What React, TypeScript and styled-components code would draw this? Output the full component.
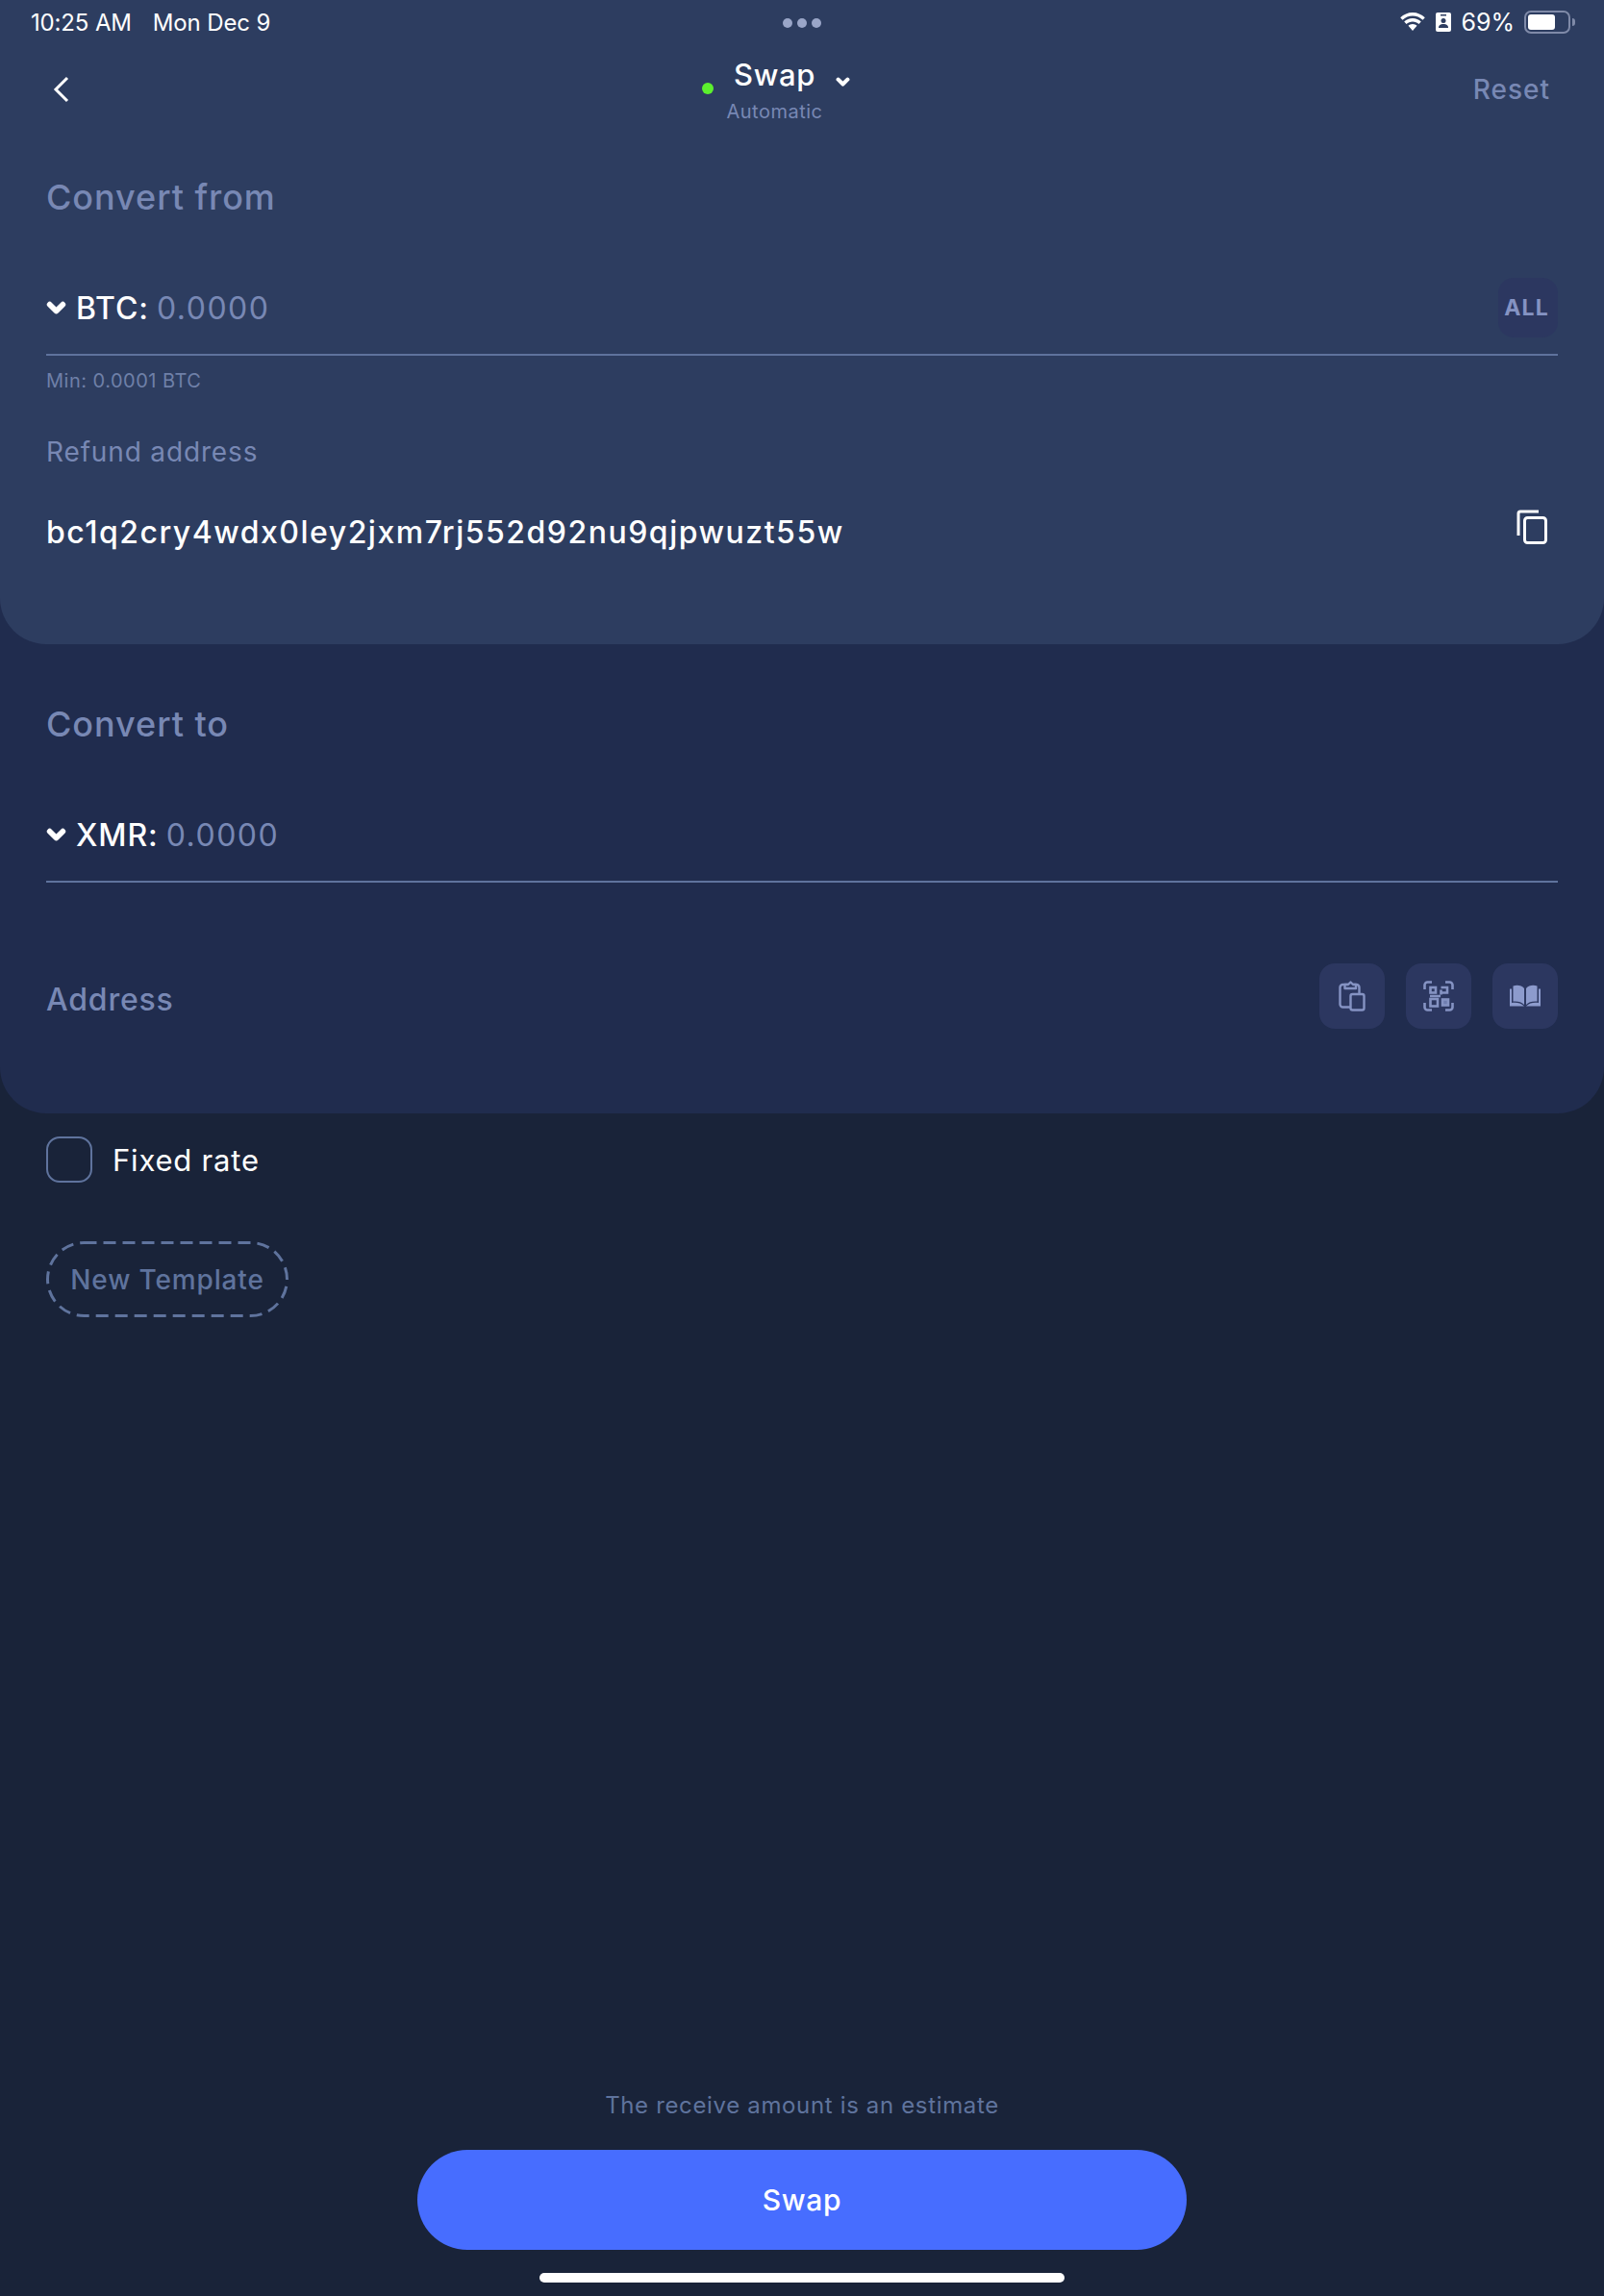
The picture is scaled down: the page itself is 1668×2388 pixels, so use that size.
import React from 'react'
import styled, { createGlobalStyle } from 'styled-components'

const GlobalStyle = createGlobalStyle`
  html, body {
    margin: 0;
    padding: 0;
    background: #192339;
  }
  * {
    box-sizing: border-box;
  }
`

const Page = styled.div`
  width: 1668px;
  height: 2388px;
  display: flex;
  flex-direction: column;
  background: #192339;
  color: #fff;
  font-family: Inter, 'Liberation Sans', sans-serif;
  overflow: hidden;
`
const Panels = styled.div`
  background: #202c4e;
  border-radius: 0 0 48px 48px;
  height: 1158px;
  flex-shrink: 0;
`
const FromPanel = styled.section`
  height: 670px;
  background: #2d3d60;
  border-radius: 0 0 48px 48px;
  padding: 0 48px;
`
const ToPanel = styled.section`
  height: 488px;
  padding: 0 48px;
`
const StatusBar = styled.div`
  height: 46px;
  margin: 0 -48px;
  padding: 0 32px;
  display: grid;
  grid-template-columns: 1fr auto 1fr;
  align-items: center;
`
const StatusLeft = styled.div`
  display: flex;
  gap: 22px;
  font-size: 24px;
  letter-spacing: -0.15px;
`
const StatusDots = styled.div`
  display: flex;
  gap: 5px;
  margin-top: 2px;
`
const Dot = styled.span`
  width: 10px;
  height: 10px;
  border-radius: 50%;
  background: #9aa6c8;
`
const StatusRight = styled.div`
  display: flex;
  justify-content: flex-end;
  align-items: center;
  font-size: 25px;
  gap: 10px;
`
const Battery = styled.div`
  width: 48px;
  height: 24px;
  border: 2px solid #7f8aa8;
  border-radius: 7px;
  padding: 2px;
  margin-right: 3px;
  position: relative;
  &::after {
    content: '';
    position: absolute;
    right: -7px;
    top: 6px;
    width: 3px;
    height: 8px;
    border-radius: 0 3px 3px 0;
    background: #7f8aa8;
  }
`
const BatteryFill = styled.div<{ $level: number }>`
  width: ${({ $level }) => $level}%;
  height: 100%;
  background: #fff;
  border-radius: 3px;
`
const NavBar = styled.header`
  height: 94px;
  display: grid;
  grid-template-columns: 1fr auto 1fr;
  align-items: center;
`
const BackButton = styled.button`
  border: 0;
  background: none;
  padding: 0;
  width: 40px;
  display: flex;
  justify-self: start;
  margin-left: 7px;
`
const NavCenter = styled.div`
  display: flex;
  flex-direction: column;
  align-items: center;
  margin-left: -57px;
  margin-top: 1px;
`
const NavTitleRow = styled.div`
  display: flex;
  align-items: center;
  position: relative;
  font-size: 31px;
  font-weight: 500;
  letter-spacing: 0.6px;
  line-height: 40px;
`
const StatusDot = styled.span`
  position: absolute;
  left: -33px;
  top: 28px;
  width: 12px;
  height: 12px;
  border-radius: 50%;
  background: #5cf02e;
`
const TitleChevron = styled.span`
  position: absolute;
  right: -36px;
  top: 22px;
  display: flex;
`
const NavSub = styled.div`
  margin-top: 5px;
  font-size: 20px;
  color: #7888b4;
  letter-spacing: 0.5px;
  line-height: 26px;
`
const ResetLink = styled.div`
  justify-self: end;
  font-size: 28px;
  font-weight: 500;
  letter-spacing: 1px;
  color: #7888b4;
  margin-right: 8px;
`
const SectionTitle = styled.h2<{ $top: number }>`
  margin: ${({ $top }) => $top}px 0 0;
  height: 66px;
  display: flex;
  align-items: center;
  font-size: 36px;
  font-weight: 500;
  letter-spacing: 0.95px;
  color: #7888b4;
`
const AmountRow = styled.div`
  margin-top: 45px;
  height: 87px;
  display: flex;
  align-items: center;
  border-bottom: 2px solid #5f739d;
  padding-bottom: 11px;
`
const CoinChevron = styled.span`
  display: flex;
  margin-right: 10px;
`
const CoinName = styled.span`
  font-size: 32px;
  font-weight: 500;
  letter-spacing: 0.9px;
`
const AmountValue = styled.span`
  font-size: 32px;
  color: #7888b4;
  letter-spacing: 1.5px;
  margin-left: 8px;
  flex: 1;
`
const AllButton = styled.div`
  width: 62px;
  height: 62px;
  border-radius: 16px;
  background: #2c3760;
  display: flex;
  align-items: center;
  justify-content: flex-end;
  padding-right: 9px;
  font-size: 23px;
  font-weight: 700;
  letter-spacing: 1.2px;
  color: #8593c3;
`
const MinNote = styled.div`
  margin-top: 13px;
  font-size: 20px;
  line-height: 26px;
  letter-spacing: 0.5px;
  color: #6f80a8;
`
const FieldLabel = styled.div`
  margin-top: 44px;
  font-size: 28px;
  line-height: 34px;
  letter-spacing: 0.85px;
  color: #7888b4;
`
const AddressRow = styled.div`
  margin-top: 41px;
  display: flex;
  align-items: center;
  justify-content: space-between;
  height: 50px;
  padding-right: 11px;
`
const AddressText = styled.div`
  font-size: 32px;
  font-weight: 500;
  letter-spacing: 1.5px;
`
const CopyIcon = styled.span`
  display: flex;
  margin-top: -10px;
`
const TargetRow = styled.div`
  margin-top: 84px;
  height: 68px;
  display: flex;
  align-items: center;
  justify-content: space-between;
`
const TargetLabel = styled.div`
  font-size: 32px;
  font-weight: 500;
  letter-spacing: 0.8px;
  color: #7888b4;
  margin-top: 6px;
`
const ActionGroup = styled.div`
  display: flex;
  gap: 22px;
`
const ActionButton = styled.button`
  width: 68px;
  height: 68px;
  border: 0;
  padding: 0;
  border-radius: 16px;
  background: #2c3760;
  display: flex;
  align-items: center;
  justify-content: center;
`
const CheckRow = styled.label`
  margin: 24px 48px 0;
  display: flex;
  align-items: center;
  gap: 21px;
  font-size: 31px;
  letter-spacing: 0.8px;
`
const CheckBox = styled.span`
  width: 48px;
  height: 48px;
  border: 2px solid #5f739d;
  border-radius: 14px;
`
const TemplateButton = styled.button`
  position: relative;
  margin: 61px 0 0 48px;
  width: 252px;
  height: 79px;
  border: 0;
  background: none;
  padding: 0;
  font-family: inherit;
  font-size: 28px;
  font-weight: 500;
  letter-spacing: 0.85px;
  color: #5f739d;
`
const DashedOutline = styled.svg`
  position: absolute;
  left: 0;
  top: 0;
`
const Footer = styled.footer`
  margin-top: auto;
  display: flex;
  flex-direction: column;
  align-items: center;
`
const EstimateNote = styled.div`
  font-size: 24px;
  line-height: 30px;
  letter-spacing: 0.65px;
  color: #5f739d;
`
const SwapButton = styled.button`
  margin-top: 31px;
  width: 800px;
  height: 104px;
  border: 0;
  border-radius: 52px;
  background: #476dff;
  color: #fff;
  font-family: inherit;
  font-size: 30px;
  font-weight: 500;
  letter-spacing: 0.7px;
`
const HomeIndicator = styled.div`
  margin: 24px 0 14px;
  width: 546px;
  height: 10px;
  border-radius: 5px;
  background: #fff;
`

const Chevron = ({ size }: { size: number }) => (
  <svg width={size} height={size * 0.7} viewBox="0 0 20 14" fill="none">
    <path d="M3.500 3.500L10 10l6.500-6.500" stroke="#fff" strokeWidth="5.500" strokeLinecap="round" strokeLinejoin="round" />
  </svg>
)

const ClipboardIcon = () => (
  <svg width="28" height="32" viewBox="0 0 28 32" fill="none" stroke="#8593c3" strokeWidth="2.400">
    <path d="M12 27.500H4.500a3 3 0 0 1-3-3V7a3 3 0 0 1 3-3h14a3 3 0 0 1 3 3v6.500" />
    <path d="M6.500 4h3.500L12.500 1.500 15 4h3v4H6.500z" strokeLinejoin="round" fill="#2c3760" />
    <rect x="12.500" y="14" width="14" height="16.500" rx="2" fill="#2c3760" />
  </svg>
)

const QrIcon = () => (
  <svg width="32" height="32" viewBox="0 0 32 32" fill="none" stroke="#8593c3" strokeWidth="2.600">
    <path d="M1.500 9V4.500a3 3 0 0 1 3-3H9M23 1.500h4.500a3 3 0 0 1 3 3V9M30.500 23v4.500a3 3 0 0 1-3 3H23M9 30.500H4.500a3 3 0 0 1-3-3V23" />
    <rect x="7.500" y="7" width="5.500" height="5.500" />
    <rect x="7.500" y="19" width="7.500" height="7.500" />
    <rect x="20" y="19.500" width="6" height="6" fill="#6f7eb0" />
    <path d="M18.500 7h6.500v5.500h-6.500M18.500 9.500v5M7 16h11" />
  </svg>
)

const BookIcon = () => (
  <svg width="32" height="25" viewBox="0 0 32 25" fill="#8d9bcd">
    <path d="M15 21C12.500 18 8 17 3.500 17.500V1.500C8 0 12.500 1 15 4z" />
    <path d="M17 21c2.500-3 7-4 11.500-3.500v-16C24 0 19.500 1 17 4z" />
    <path d="M0 4.500h2v14.500c4.500-.8 9-.3 13 3.500H0zM32 4.500h-2v14.500c-4.500-.8-9-.3-13 3.500h15z" />
  </svg>
)

const WifiIcon = () => (
  <svg width="28" height="20" viewBox="0 0 28 20" fill="#fff">
    <path d="M14 3.500c4 0 7.500 1.500 10.500 4.300l2.300-2.500C23.300 2 18.900 0 14 0S4.700 2 1.200 5.300l2.300 2.500C6.500 5 10 3.500 14 3.500z" />
    <path d="M14 9.500c2.500 0 4.700 1 6.500 2.600l2.300-2.500C20.400 7.400 17.400 6 14 6S7.600 7.400 5.200 9.600l2.300 2.500C9.300 10.500 11.500 9.500 14 9.500z" />
    <path d="M14 12c-1.800 0-3.300.7-4.500 1.800L14 19l4.500-5.200C17.300 12.700 15.800 12 14 12z" />
  </svg>
)

const IdIcon = () => (
  <svg width="16" height="20" viewBox="0 0 16 20">
    <rect width="16" height="20" rx="2" fill="#fff" />
    <rect x="5" y="2" width="6" height="1.500" fill="#2d3d60" />
    <circle cx="8" cy="8.500" r="2.500" fill="#2d3d60" />
    <path d="M3 16c0-3 2-4 5-4s5 1 5 4z" fill="#2d3d60" />
  </svg>
)

const App = () => (
  <Page>
    <GlobalStyle />
    <Panels>
      <FromPanel>
        <StatusBar>
          <StatusLeft>
            <span>10:25 AM</span>
            <span>Mon Dec 9</span>
          </StatusLeft>
          <StatusDots>
            <Dot />
            <Dot />
            <Dot />
          </StatusDots>
          <StatusRight>
            <WifiIcon />
            <IdIcon />
            <span>69%</span>
            <Battery>
              <BatteryFill $level={69} />
            </Battery>
          </StatusRight>
        </StatusBar>
        <NavBar>
          <BackButton>
            <svg width="18" height="28" viewBox="0 0 18 28" fill="none">
              <path d="M15 2L3 14l12 12" stroke="#fff" strokeWidth="3" />
            </svg>
          </BackButton>
          <NavCenter>
            <NavTitleRow>
              <StatusDot />
              Swap
              <TitleChevron>
                <Chevron size={15} />
              </TitleChevron>
            </NavTitleRow>
            <NavSub>Automatic</NavSub>
          </NavCenter>
          <ResetLink>Reset</ResetLink>
        </NavBar>
        <SectionTitle $top={32}>Convert from</SectionTitle>
        <AmountRow>
          <CoinChevron>
            <Chevron size={21} />
          </CoinChevron>
          <CoinName>BTC:</CoinName>
          <AmountValue>0.0000</AmountValue>
          <AllButton>ALL</AllButton>
        </AmountRow>
        <MinNote>Min: 0.0001 BTC</MinNote>
        <FieldLabel>Refund address</FieldLabel>
        <AddressRow>
          <AddressText>bc1q2cry4wdx0ley2jxm7rj552d92nu9qjpwuzt55w</AddressText>
          <CopyIcon>
            <svg width="32" height="36" viewBox="0 0 32 36" fill="none" stroke="#fff" strokeWidth="3">
              <path d="M23 2H4a2 2 0 0 0-2 2v23" />
              <rect x="8.500" y="8.500" width="22" height="26" rx="3" />
            </svg>
          </CopyIcon>
        </AddressRow>
      </FromPanel>
      <ToPanel>
        <SectionTitle $top={50}>Convert to</SectionTitle>
        <AmountRow>
          <CoinChevron>
            <Chevron size={21} />
          </CoinChevron>
          <CoinName>XMR:</CoinName>
          <AmountValue>0.0000</AmountValue>
        </AmountRow>
        <TargetRow>
          <TargetLabel>Address</TargetLabel>
          <ActionGroup>
            <ActionButton>
              <ClipboardIcon />
            </ActionButton>
            <ActionButton>
              <QrIcon />
            </ActionButton>
            <ActionButton>
              <BookIcon />
            </ActionButton>
          </ActionGroup>
        </TargetRow>
      </ToPanel>
    </Panels>
    <CheckRow>
      <CheckBox />
      Fixed rate
    </CheckRow>
    <div>
      <TemplateButton>
        <DashedOutline width="252" height="79" fill="none">
          <rect x="1.500" y="1.500" width="249" height="76" rx="38" stroke="#5f739d" strokeWidth="3" strokeDasharray="13 7" />
        </DashedOutline>
        New Template
      </TemplateButton>
    </div>
    <Footer>
      <EstimateNote>The receive amount is an estimate</EstimateNote>
      <SwapButton>Swap</SwapButton>
      <HomeIndicator />
    </Footer>
  </Page>
)

export default App
